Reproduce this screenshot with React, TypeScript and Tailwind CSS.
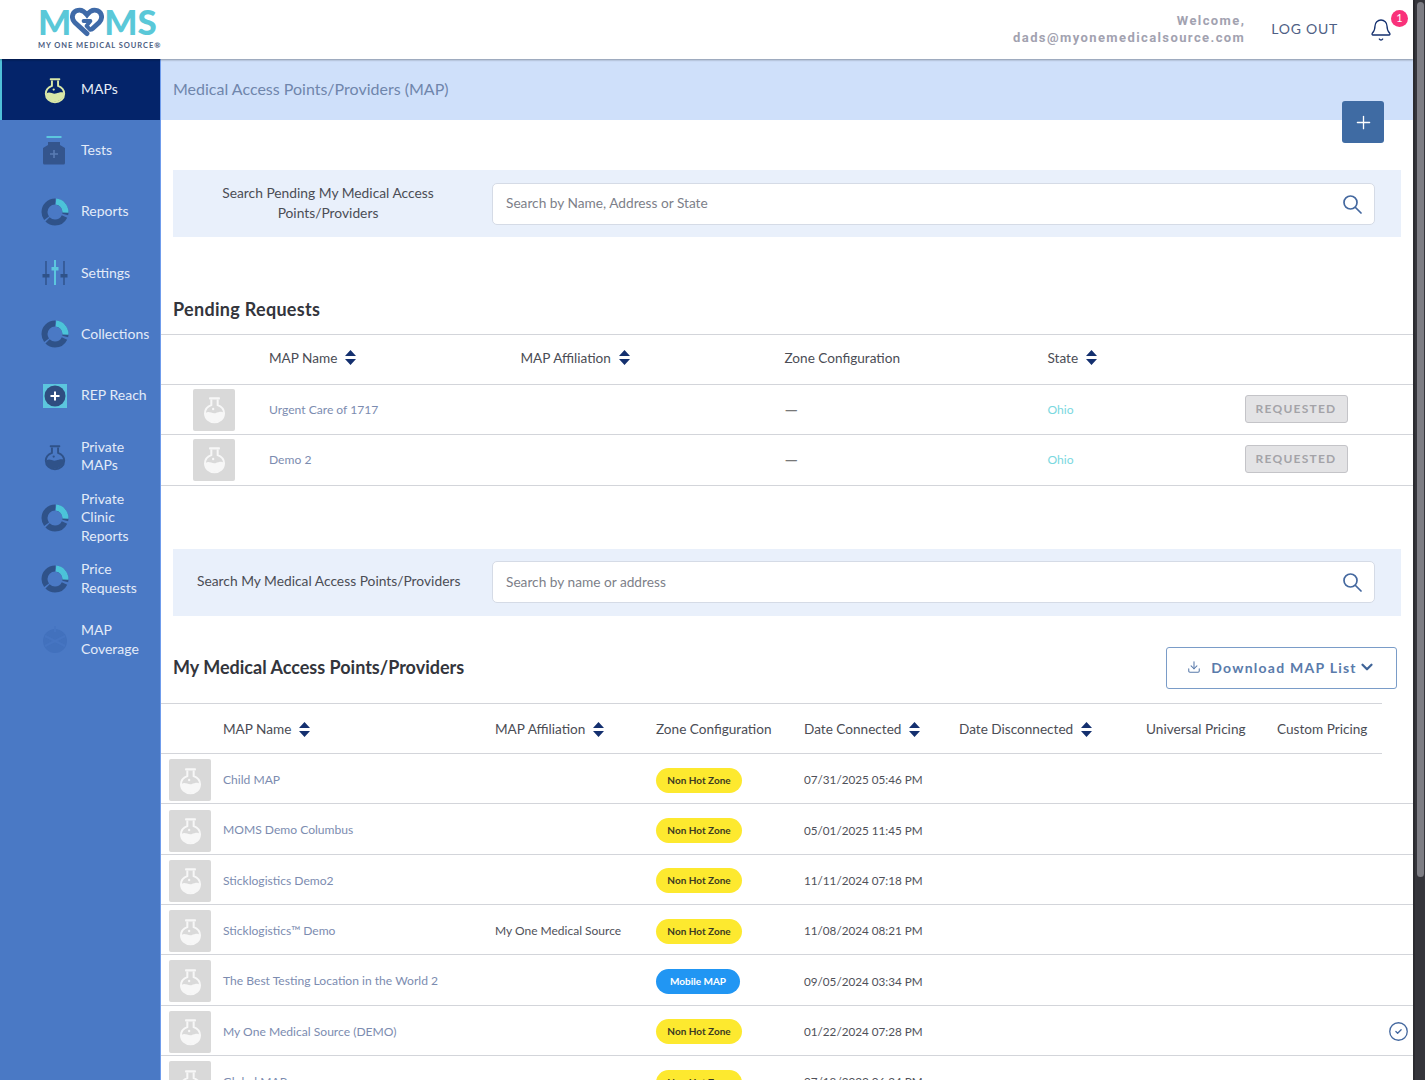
import { ChevronDown, Download, Plus, Bell, CircleCheck } from "lucide-react";

function Flask({ body = "#d9e8a8", liquid = "#d9e8a8", size = 32 }: { body?: string; liquid?: string; size?: number }) {
  return (
    <svg width={size} height={size} viewBox="0 0 32 32" fill="none">
      <rect x="10" y="2.500" width="12" height="2.400" rx="0.800" fill={body} />
      <path d="M12.500 5v6.200C8 12.800 5.500 16.400 5.500 20.200 5.500 26 10.200 30 16 30s10.500-4 10.500-9.800c0-3.800-2.500-7.400-7-9V5" stroke={body} strokeWidth="2.200" />
      <path d="M6 20c4-3 7 1 11 0 3.500-.9 6-2.200 9-.8.700 5.800-4 10-10 10S5.500 25 6 20z" fill={liquid} />
      <circle cx="14.500" cy="15.500" r="1.300" fill={liquid} />
    </svg>
  );
}

function Bottle() {
  return (
    <svg width="24" height="29" viewBox="0 0 24 29" fill="none">
      <rect x="3.500" y="0" width="15" height="2" fill="#5cc6de" />
      <path d="M5 6h12v3l5 3v15a1.500 1.500 0 0 1-1.500 1.500h-19A1.500 1.500 0 0 1 0 27V12l5-3z" fill="#34558d" />
      <path d="M11 14v8M7 18h8" stroke="#5a7cb4" strokeWidth="1.600" />
    </svg>
  );
}

function Donut() {
  return (
    <svg width="28" height="28" viewBox="0 0 28 28" fill="none">
      <g strokeWidth="6" transform="rotate(-90 14 14)">
        <circle cx="14" cy="14" r="10.500" stroke="#2f5289" strokeDasharray="20 1.500 24 1.500 17 2" strokeDashoffset="-21" />
        <circle cx="14" cy="14" r="10.500" stroke="#4cc3d9" strokeDasharray="16 50" strokeDashoffset="-1" />
      </g>
    </svg>
  );
}

function Sliders() {
  return (
    <svg width="26" height="28" viewBox="0 0 26 28" fill="none">
      <path d="M4 2v24M22 2v24" stroke="#2f5289" strokeWidth="1.400" />
      <path d="M13 1v25" stroke="#5cc6de" strokeWidth="2" />
      <rect x="0.500" y="15" width="7" height="3.500" fill="#2f5289" />
      <rect x="18.500" y="15" width="7" height="3.500" fill="#2f5289" />
      <rect x="9.500" y="8" width="7" height="3.500" fill="#5cc6de" />
    </svg>
  );
}

function RepReach() {
  return (
    <svg width="24" height="24" viewBox="0 0 24 24" fill="none">
      <rect width="24" height="24" fill="#5cc6de" />
      <circle cx="12" cy="12" r="10.500" fill="#2f4d80" />
      <path d="M12 7.500v9M7.500 12h9" stroke="#fff" strokeWidth="2" />
    </svg>
  );
}

function Coverage() {
  return (
    <svg width="28" height="32" viewBox="0 0 28 32" fill="none">
      <circle cx="14" cy="17" r="12" fill="#4271bd" />
      <path d="M14 2v6M4 12l20 10M24 12L4 22" stroke="#4675c2" strokeWidth="2" />
    </svg>
  );
}

function SearchIcon() {
  return (
    <svg width="20" height="20" viewBox="0 0 20 20" fill="none" stroke="#44689f" strokeWidth="1.700" strokeLinecap="round">
      <circle cx="8.500" cy="8.500" r="6.500" />
      <path d="M13.500 13.500L19 19" />
    </svg>
  );
}

function Logo() {
  return (
    <div className="flex flex-col items-start pb-[4px]">
      <div className="flex items-center h-[32px] text-[35px] leading-none font-black text-[#5ac8d8] whitespace-nowrap">
        <span>M</span>
        <svg width="34" height="30" viewBox="0 0 35 30" fill="none" className="-ml-[1px]">
          <path d="M17.500 27L5 15.500C1 11.500 2 5.500 6.500 3.500 10.500 1.800 14.500 3.500 17.500 7.500 20.500 3.500 24.500 1.800 28.500 3.500 33 5.500 34 11.500 30 15.500L23 22" stroke="#3f6aa8" strokeWidth="5" strokeLinecap="round" />
          <path d="M14 14h7l-4 5 4 4" stroke="#3f6aa8" strokeWidth="4" strokeLinecap="round" strokeLinejoin="round" />
        </svg>
        <span>MS</span>
      </div>
      <div className="text-[7.500px] font-bold tracking-[0.950px] text-[#4b5d82] leading-none mt-[4px] whitespace-nowrap">MY ONE MEDICAL SOURCE®</div>
    </div>
  );
}

const navItems: { label: string[]; icon: React.ReactNode; active?: boolean }[] = [
  { label: ["MAPs"], icon: <Flask size={32} />, active: true },
  { label: ["Tests"], icon: <Bottle /> },
  { label: ["Reports"], icon: <Donut /> },
  { label: ["Settings"], icon: <Sliders /> },
  { label: ["Collections"], icon: <Donut /> },
  { label: ["REP Reach"], icon: <RepReach /> },
  { label: ["Private", "MAPs"], icon: <Flask body="#2f5289" liquid="#2f5289" size={30} /> },
  { label: ["Private", "Clinic", "Reports"], icon: <Donut /> },
  { label: ["Price", "Requests"], icon: <Donut /> },
  { label: ["MAP", "Coverage"], icon: <Coverage /> },
];

function Sidebar() {
  return (
    <aside className="w-[161px] shrink-0 bg-[#4a79c5] border-r border-[#6f9cec] flex flex-col">
      {navItems.map((item) => (
        <div
          key={item.label.join(" ")}
          className={`h-[61.200px] shrink-0 flex items-center gap-[12px] pl-[39px] border-l-2 text-[14px] leading-[18.300px] ${
            item.active ? "bg-[#04246a] border-[#4fc0d8] text-[#e6edf8]" : "border-transparent text-[#e3ebf8]"
          }`}
        >
          <div className="w-[28px] shrink-0 flex justify-center">{item.icon}</div>
          <div className="pb-[1px] whitespace-nowrap">
            {item.label.map((l) => (
              <div key={l}>{l}</div>
            ))}
          </div>
        </div>
      ))}
    </aside>
  );
}

function Sort() {
  return (
    <svg width="11" height="15" viewBox="0 0 11 15" className="shrink-0">
      <path d="M5.500 0L11 6H0zM0 9h11l-5.500 6z" fill="#14306f" />
    </svg>
  );
}

function Th({ label, sort }: { label: string; sort?: boolean }) {
  return (
    <div className="flex items-center gap-[8px] pb-[3px] text-[13.600px] text-[#4b4d55] whitespace-nowrap">
      {label}
      {sort && <Sort />}
    </div>
  );
}

function Thumb() {
  return (
    <div className="w-[42px] h-[42px] bg-[#d9d9d9] rounded-[2px] flex items-center justify-center">
      <Flask body="#f7f7f7" liquid="#f7f7f7" size={29} />
    </div>
  );
}

function SearchBar({ label, placeholder }: { label: string[]; placeholder: string }) {
  return (
    <div className="h-[67px] mx-[12px] pl-[24px] pr-[26px] bg-[#e9f0fb] flex items-center">
      <div className="w-[295px] pr-[33px] pb-[2px] shrink-0 text-center text-[13.800px] leading-[20px] text-[#4b4d55]">
        {label.map((l) => (
          <div key={l} className="whitespace-nowrap">{l}</div>
        ))}
      </div>
      <div className="flex-1 h-[42px] bg-white border border-[#d5dbe6] rounded-[5px] flex items-center justify-between pl-[13px] pr-[12px]">
        <span className="text-[13.700px] text-[#7d7f89]">{placeholder}</span>
        <SearchIcon />
      </div>
    </div>
  );
}

const pendingCols = "grid-cols-[108px_251.500px_264px_263px_197px_1fr]";
const pending = ["Urgent Care of 1717", "Demo 2"];

function PendingTable() {
  return (
    <div>
      <div className={`grid ${pendingCols} h-[51px] items-center border-y border-[#d3d5da]`}>
        <div />
        <Th label="MAP Name" sort />
        <Th label="MAP Affiliation" sort />
        <Th label="Zone Configuration" />
        <Th label="State" sort />
        <div />
      </div>
      {pending.map((name) => (
        <div key={name} className={`grid ${pendingCols} h-[50.300px] items-center border-b border-[#d3d5da] text-[12.100px]`}>
          <div className="pl-[32px]"><Thumb /></div>
          <div className="text-[#7c8cb0]">{name}</div>
          <div />
          <div className="text-[17px] leading-none text-[#777]">—</div>
          <div className="text-[#7ad8e0]">Ohio</div>
          <div className="pb-[2px]">
            <div className="w-[103px] h-[28px] flex items-center justify-center bg-[#e3e3e5] border border-[#c4c4c8] rounded-[3px] text-[12px] font-bold tracking-[1.250px] text-[#a3a3a8]">REQUESTED</div>
          </div>
        </div>
      ))}
    </div>
  );
}

type Row = { name: string; affiliation?: string; zone: "hot" | "mobile"; date: string; checked?: boolean };
const rows: Row[] = [
  { name: "Child MAP", zone: "hot", date: "07/31/2025 05:46 PM" },
  { name: "MOMS Demo Columbus", zone: "hot", date: "05/01/2025 11:45 PM" },
  { name: "Sticklogistics Demo2", zone: "hot", date: "11/11/2024 07:18 PM" },
  { name: "Sticklogistics™ Demo", affiliation: "My One Medical Source", zone: "hot", date: "11/08/2024 08:21 PM" },
  { name: "The Best Testing Location in the World 2", zone: "mobile", date: "09/05/2024 03:34 PM" },
  { name: "My One Medical Source (DEMO)", zone: "hot", date: "01/22/2024 07:28 PM", checked: true },
  { name: "Global MAP", zone: "hot", date: "07/18/2023 06:24 PM" },
];

const mapCols = "grid-cols-[62px_272px_161px_148px_155px_187px_131px_1fr]";

function MapTable() {
  return (
    <div>
      <div className={`grid ${mapCols} h-[51px] pt-[4px] items-center border-y border-[#d3d5da] mr-[31px]`}>
        <div />
        <Th label="MAP Name" sort />
        <Th label="MAP Affiliation" sort />
        <Th label="Zone Configuration" />
        <Th label="Date Connected" sort />
        <Th label="Date Disconnected" sort />
        <Th label="Universal Pricing" />
        <Th label="Custom Pricing" />
      </div>
      {rows.map((r) => (
        <div key={r.name} className={`grid ${mapCols} h-[50.300px] pt-[3px] items-center border-b border-[#d3d5da] text-[12.100px]`}>
          <div className="pl-[8px]"><Thumb /></div>
          <div className="text-[#7c8cb0] whitespace-nowrap">{r.name}</div>
          <div className="text-[12px] text-[#4f5159] whitespace-nowrap">{r.affiliation}</div>
          <div className="flex">
            {r.zone === "hot" ? (
              <span className="inline-flex items-center justify-center w-[86px] h-[25px] rounded-full bg-[#fde92f] text-[10px] font-bold text-[#3c3a22]">Non Hot Zone</span>
            ) : (
              <span className="inline-flex items-center justify-center w-[84px] h-[25px] rounded-full bg-[#2196f3] text-[10px] font-bold text-white">Mobile MAP</span>
            )}
          </div>
          <div className="text-[11.700px] text-[#4f5159] whitespace-nowrap">{r.date}</div>
          <div />
          <div />
          <div className="flex justify-end pr-[4px]">
            {r.checked && <CircleCheck size={21} strokeWidth={1.500} className="text-[#44689f]" />}
          </div>
        </div>
      ))}
    </div>
  );
}

export default function App() {
  return (
    <div className="h-[1080px] overflow-hidden flex bg-white font-['Lato','Noto_Sans',sans-serif]">
      <div className="flex-1 min-w-0 flex flex-col">
        <header className="h-[59px] shrink-0 flex items-center bg-white shadow-[0_1px_2px_rgba(0,0,0,0.35)] relative z-10">
          <div className="w-[161px] pl-[38px] shrink-0"><Logo /></div>
          <div className="flex-1 text-right text-[13px] leading-[16.500px] font-bold tracking-[1.400px] text-[#a2a2b0] font-['Roboto',sans-serif]">
            <div>Welcome,</div>
            <div>dads@myonemedicalsource.com</div>
          </div>
          <div className="ml-[26px] pb-[2px] text-[14px] tracking-[0.750px] text-[#4f5f85]">LOG OUT</div>
          <div className="relative ml-[31px] mr-[22px] w-[22px]">
            <Bell size={24} strokeWidth={1.300} className="text-[#14306f]" />
            <span className="absolute -top-[8px] left-[22px] w-[17px] h-[17px] rounded-full bg-[#f9317a] text-white text-[11px] flex items-center justify-center">1</span>
          </div>
        </header>
        <div className="flex-1 min-h-0 flex">
          <Sidebar />
          <main className="flex-1 min-w-0 relative">
            <div className="h-[61px] bg-[#cfe0fa] flex items-center pl-[12px] pb-[2px] text-[16px] text-[#6f86ac]">
              Medical Access Points/Providers (MAP)
            </div>
            <button className="absolute left-[1181px] top-[42px] w-[42px] h-[42px] rounded-[3px] bg-[#3f6ba3] flex items-center justify-center text-white">
              <Plus size={21} strokeWidth={1.500} />
            </button>
            <div className="mt-[50px]">
              <SearchBar label={["Search Pending My Medical Access", "Points/Providers"]} placeholder="Search by Name, Address or State" />
            </div>
            <h2 className="mt-[60px] ml-[12px] h-[37px] text-[18px] leading-[24px] font-bold tracking-[0.300px] text-[#33353c]">Pending Requests</h2>
            <PendingTable />
            <div className="mt-[63px]">
              <SearchBar label={["Search My Medical Access Points/Providers"]} placeholder="Search by name or address" />
            </div>
            <div className="mt-[31px] h-[56.500px] pl-[12px] pr-[16px] flex items-start justify-between">
              <h2 className="mt-[8px] text-[18px] leading-[24px] font-bold text-[#33353c]">My Medical Access Points/Providers</h2>
              <button className="w-[231px] h-[42px] pb-[1px] border border-[#7a9cc8] rounded-[3px] flex items-center justify-center gap-[1px] text-[14px] font-bold tracking-[1.250px] text-[#5a7bab]">
                <Download size={14} strokeWidth={1.800} className="mr-[9px]" />
                Download MAP List
                <ChevronDown size={18} strokeWidth={3} className="text-[#3f6498]" />
              </button>
            </div>
            <MapTable />
          </main>
        </div>
      </div>
      <div className="w-[12px] shrink-0 bg-[#35353b] border-l-2 border-[#2b2b30] pt-[2px] pl-[2px] pr-[1px]">
        <div className="h-[875px] rounded-full bg-[#7d7d84]" />
      </div>
    </div>
  );
}
